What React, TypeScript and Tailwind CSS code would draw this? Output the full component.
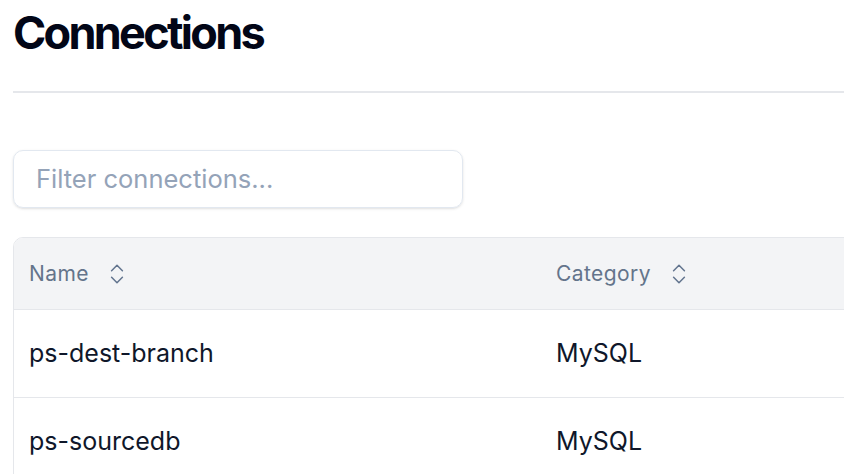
import React from "react";

function SortIcon() {
  return (
    <svg width="26" height="26" viewBox="0 0 24 24" fill="none" stroke="currentColor" strokeWidth="1.4" strokeLinecap="round" strokeLinejoin="round" className="text-slate-500">
      <path d="m7 15 5 5 5-5" />
      <path d="m7 9 5-5 5 5" />
    </svg>
  );
}

export default function App() {
  const rows = [
    { name: "ps-dest-branch", category: "MySQL" },
    { name: "ps-sourcedb", category: "MySQL" },
  ];
  return (
    <div className="w-[844px] h-[474px] overflow-hidden bg-white" style={{ fontFamily: "Inter, 'Noto Sans', sans-serif" }}>
      <div className="w-[1100px] pl-[13px]">
        <h1 className="pt-[10px] text-[45px] leading-[45px] font-bold tracking-[-0.06em] text-[#020617]">Connections</h1>
        <div className="mt-[36px] h-[2px] bg-[#e5e7eb]" />
        <div className="mt-[57px]">
          <div className="w-[450px] h-[58px] rounded-[10px] border border-[#e2e8f0] shadow-sm flex items-center pl-[22px]">
            <span className="text-[25.5px] text-[#94a3b8]">Filter connections...</span>
          </div>
        </div>
        <div className="mt-[29px] border border-[#e5e7eb] rounded-tl-[10px] overflow-hidden">
          <div className="h-[72px] bg-[#f3f4f6] border-b border-[#e5e7eb] flex items-center">
            <div className="w-[527px] pl-[15px] flex items-center gap-[15px] text-[21px] tracking-[0.02em] text-[#64748b]">
              <span>Name</span>
              <SortIcon />
            </div>
            <div className="pl-[15px] flex items-center gap-[15px] text-[21px] tracking-[0.02em] text-[#64748b]">
              <span>Category</span>
              <SortIcon />
            </div>
          </div>
          {rows.map((r) => (
            <div key={r.name} className="h-[88px] border-b border-[#e5e7eb] flex items-center text-[25px] text-[#0f172a]">
              <div className="w-[527px] pl-[15px]">{r.name}</div>
              <div className="pl-[15px]">{r.category}</div>
            </div>
          ))}
        </div>
      </div>
    </div>
  );
}
